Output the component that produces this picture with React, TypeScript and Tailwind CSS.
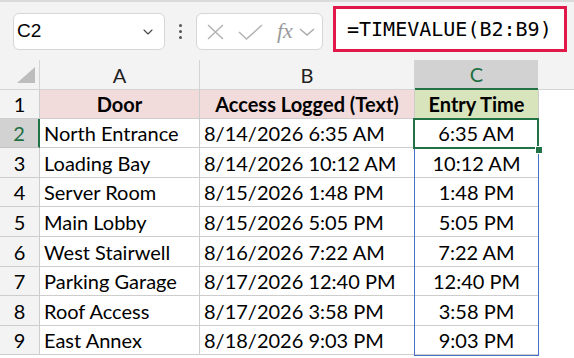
import { ChevronDown } from "lucide-react";

const rows = [
  { door: "North Entrance", logged: "8/14/2026 6:35 AM", time: "6:35 AM", h: "h-[29px]" },
  { door: "Loading Bay", logged: "8/14/2026 10:12 AM", time: "10:12 AM", h: "h-[30px]" },
  { door: "Server Room", logged: "8/15/2026 1:48 PM", time: "1:48 PM", h: "h-[29px]" },
  { door: "Main Lobby", logged: "8/15/2026 5:05 PM", time: "5:05 PM", h: "h-[30px]" },
  { door: "West Stairwell", logged: "8/16/2026 7:22 AM", time: "7:22 AM", h: "h-[30px]" },
  { door: "Parking Garage", logged: "8/17/2026 12:40 PM", time: "12:40 PM", h: "h-[29px]" },
  { door: "Roof Access", logged: "8/17/2026 3:58 PM", time: "3:58 PM", h: "h-[30px]" },
  { door: "East Annex", logged: "8/18/2026 9:03 PM", time: "9:03 PM", h: "h-[29px]" },
];

const cell = "border-r border-b border-[#cdcdcd] flex items-center";

export default function App() {
  return (
    <div className="w-[574px] h-[358px] overflow-hidden bg-white text-black" style={{ fontFamily: "Lato, 'Noto Sans', sans-serif" }}>
      {/* formula bar */}
      <div className="h-[60px] bg-[#f3f3f3] border-t-2 border-[#dadada] flex items-start">
        <div className="ml-[13px] mt-[11px] w-[152px] h-[37px] bg-white border border-[#d6d6d6] rounded-md flex items-center pl-[3px] pr-2">
          <span className="text-[19px] flex-1" style={{ fontFamily: "'Liberation Sans', Arial, sans-serif" }}>C2</span>
          <ChevronDown size={16} strokeWidth={1.6} className="text-[#444]" />
        </div>
        <div className="w-[31px] h-[58px] flex flex-col items-center justify-center gap-[3px]">
          <span className="w-[3px] h-[3px] bg-[#555] rounded-full" />
          <span className="w-[3px] h-[3px] bg-[#555] rounded-full" />
          <span className="w-[3px] h-[3px] bg-[#555] rounded-full" />
        </div>
        <div className="mt-[11px] w-[127px] h-[37px] bg-white border border-[#d6d6d6] rounded-md flex items-center pl-[10px]">
          <svg width="17" height="16" viewBox="0 0 17 16" className="mr-[14px]">
            <path d="M1 1L16 15M16 1L1 15" stroke="#b3b3b3" strokeWidth="1.5" fill="none" />
          </svg>
          <svg width="25" height="16" viewBox="0 0 25 16" className="mr-[14px]">
            <path d="M1 8L8.5 15L24 1" stroke="#b3b3b3" strokeWidth="1.5" fill="none" />
          </svg>
          <span className="italic text-[22px] leading-none text-[#9a9a9a] mb-[2px]" style={{ fontFamily: "'Liberation Serif', serif" }}>fx</span>
          <svg width="16" height="10" viewBox="0 0 16 10" className="ml-[6px]">
            <path d="M1 2L8 8L15 2" stroke="#aaaaaa" strokeWidth="1.4" fill="none" />
          </svg>
        </div>
        <div className="ml-[10px] mt-[4px] w-[234px] h-[46px] bg-white border-[3px] border-[#e0194a] flex items-center pl-[11px]">
          <span className="text-[20px]" style={{ fontFamily: "'DejaVu Sans Mono', monospace" }}>=TIMEVALUE(B2:B9)</span>
        </div>
      </div>

      {/* grid */}
      <div className="relative">
        <div className="flex h-[30px] bg-[#f3f3f3] text-[20px] text-[#222]">
          <div className="w-[40px] border-r border-b border-[#d4d4d4] relative">
            <div className="absolute right-[4px] bottom-[6px] w-0 h-0 border-l-[18px] border-l-transparent border-b-[16px] border-b-[#bdbdbd]" />
          </div>
          <div className="w-[160px] border-r border-b border-[#d4d4d4] flex items-center justify-center">A</div>
          <div className="w-[215px] border-r border-b border-[#d4d4d4] flex items-center justify-center">B</div>
          <div className="w-[123px] bg-[#d2d2d2] border-b-2 border-[#217346] flex items-center justify-center text-[#1e6e42]">C</div>
          <div className="flex-1 border-b border-[#d4d4d4]" />
        </div>
        <div className="flex h-[29px] text-[20px]">
          <div className={`w-[40px] bg-[#f3f3f3] ${cell} justify-center`}>1</div>
          <div className={`w-[160px] bg-[#f2dcdb] ${cell} justify-center font-bold`}>Door</div>
          <div className={`w-[215px] bg-[#f2dcdb] ${cell} justify-center font-bold`}>Access Logged (Text)</div>
          <div className={`w-[124px] bg-[#d8e4bc] ${cell} justify-center font-bold`}>Entry Time</div>
          <div className="flex-1" />
        </div>
        {rows.map((r, i) => (
          <div key={r.door} className={`flex ${r.h} text-[20px]`}>
            {i === 0 ? (
              <div className="w-[40px] bg-[#d2d2d2] border-r-2 border-r-[#217346] border-b border-b-[#c4c4c4] flex items-center justify-center text-[#1e6e42]">2</div>
            ) : (
              <div className={`w-[40px] bg-[#f3f3f3] ${cell} justify-center`}>{i + 2}</div>
            )}
            <div className={`w-[160px] ${cell} pl-[4px]`}>{r.door}</div>
            <div className={`w-[215px] ${cell} pl-[4px]`}>{r.logged}</div>
            <div className={`w-[124px] ${cell} justify-center`}>{r.time}</div>
            <div className="flex-1" />
          </div>
        ))}
        {/* spill range border */}
        <div className="absolute left-[414px] top-[59px] w-[125px] h-[237px] border border-[#4472c4] pointer-events-none" />
        {/* active cell */}
        <div className="absolute left-[413px] top-[58px] w-[126px] h-[31px] border-2 border-[#217346] pointer-events-none" />
        <div className="absolute left-[535px] top-[86px] w-[6px] h-[6px] bg-[#217346] border border-white box-content" />
      </div>
    </div>
  );
}
